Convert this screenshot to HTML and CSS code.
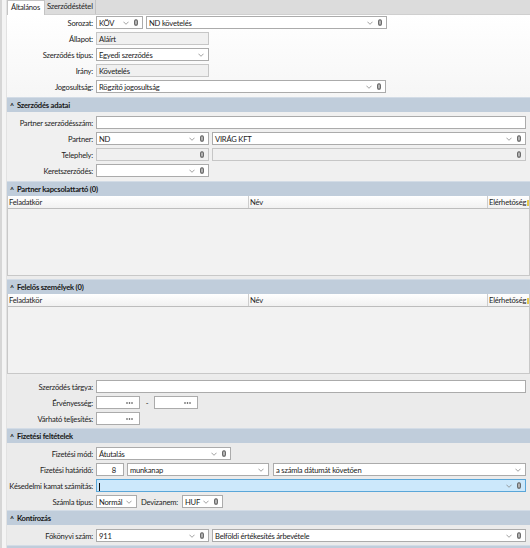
FILE: index.html
```html
<!DOCTYPE html>
<html lang="hu">
<head>
<meta charset="utf-8">
<title>Szerződés</title>
<link rel="stylesheet" href="styles.css">
</head>
<body>
<div class="app">
  <div class="side"></div>
  <div class="main">
    <div class="tabs">
      <div class="tab on">Általános</div>
      <div class="tab">Szerződéstétel</div>
    </div>

    <div class="form top">
      <div class="row"><div class="lbl">Sorozat:</div>
        <div class="fld w47"><span class="v">KÖV</span><svg class="chev" viewBox="0 0 7 4"><polyline points="0.5,0.5 3.5,3.5 6.5,0.5"/></svg><svg class="clip" viewBox="0 0 4 7"><rect x="0.7" y="0.7" width="2.6" height="5.6" rx="1.3"/></svg></div>
        <div class="fld w241"><span class="v">ND követelés</span><svg class="chev" viewBox="0 0 7 4"><polyline points="0.5,0.5 3.5,3.5 6.5,0.5"/></svg><svg class="clip" viewBox="0 0 4 7"><rect x="0.7" y="0.7" width="2.6" height="5.6" rx="1.3"/></svg></div>
      </div>
      <div class="row"><div class="lbl">Állapot:</div>
        <div class="fld w113 dis"><span class="v">Aláírt</span></div>
      </div>
      <div class="row"><div class="lbl">Szerződés típus:</div>
        <div class="fld w113"><span class="v">Egyedi szerződés</span><svg class="chev" viewBox="0 0 7 4"><polyline points="0.5,0.5 3.5,3.5 6.5,0.5"/></svg></div>
      </div>
      <div class="row"><div class="lbl">Irány:</div>
        <div class="fld w113 dis"><span class="v">Követelés</span></div>
      </div>
      <div class="row"><div class="lbl">Jogosultság:</div>
        <div class="fld w290"><span class="v">Rögzítő jogosultság</span><svg class="chev" viewBox="0 0 7 4"><polyline points="0.5,0.5 3.5,3.5 6.5,0.5"/></svg><svg class="clip" viewBox="0 0 4 7"><rect x="0.7" y="0.7" width="2.6" height="5.6" rx="1.3"/></svg></div>
      </div>
    </div>

    <div class="sh"><span class="car">^</span>Szerződés adatai</div>
    <div class="form adat">
      <div class="row"><div class="lbl">Partner szerződésszám:</div>
        <div class="fld grow"><span class="v"></span></div>
      </div>
      <div class="row"><div class="lbl">Partner:</div>
        <div class="fld w113"><span class="v">ND</span><svg class="chev" viewBox="0 0 7 4"><polyline points="0.5,0.5 3.5,3.5 6.5,0.5"/></svg><svg class="clip" viewBox="0 0 4 7"><rect x="0.7" y="0.7" width="2.6" height="5.6" rx="1.3"/></svg></div>
        <div class="fld grow"><span class="v">VIRÁG KFT</span><svg class="chev" viewBox="0 0 7 4"><polyline points="0.5,0.5 3.5,3.5 6.5,0.5"/></svg><svg class="clip" viewBox="0 0 4 7"><rect x="0.7" y="0.7" width="2.6" height="5.6" rx="1.3"/></svg></div>
      </div>
      <div class="row"><div class="lbl">Telephely:</div>
        <div class="fld w113 dis"><span class="v"></span><svg class="clip" viewBox="0 0 4 7"><rect x="0.7" y="0.7" width="2.6" height="5.6" rx="1.3"/></svg></div>
        <div class="fld grow dis"><span class="v"></span><svg class="clip" viewBox="0 0 4 7"><rect x="0.7" y="0.7" width="2.6" height="5.6" rx="1.3"/></svg></div>
      </div>
      <div class="row"><div class="lbl">Keretszerződés:</div>
        <div class="fld w113"><span class="v"></span><svg class="chev" viewBox="0 0 7 4"><polyline points="0.5,0.5 3.5,3.5 6.5,0.5"/></svg><svg class="clip" viewBox="0 0 4 7"><rect x="0.7" y="0.7" width="2.6" height="5.6" rx="1.3"/></svg></div>
      </div>
    </div>

    <div class="sh"><span class="car">^</span>Partner kapcsolattartó (0)</div>
    <div class="tblwrap">
      <div class="tbl">
        <div class="thead">
          <div class="th c1">Feladatkör</div>
          <div class="th c2">Név</div>
          <div class="th c3">Elérhetőség<span class="flt"></span></div>
        </div>
        <div class="tbody"></div>
      </div>
    </div>

    <div class="sh"><span class="car">^</span>Felelős személyek (0)</div>
    <div class="tblwrap">
      <div class="tbl">
        <div class="thead">
          <div class="th c1">Feladatkör</div>
          <div class="th c2">Név</div>
          <div class="th c3">Elérhetőség<span class="flt"></span></div>
        </div>
        <div class="tbody"></div>
      </div>
    </div>

    <div class="form low">
      <div class="row"><div class="lbl">Szerződés tárgya:</div>
        <div class="fld grow"><span class="v"></span></div>
      </div>
      <div class="row"><div class="lbl">Érvényesség:</div>
        <div class="fld w44"><span class="v"></span><svg class="dots" viewBox="0 0 7 2"><circle cx="1" cy="1" r="0.8"/><circle cx="3.5" cy="1" r="0.8"/><circle cx="6" cy="1" r="0.8"/></svg></div>
        <span class="dash">-</span>
        <div class="fld w44"><span class="v"></span><svg class="dots" viewBox="0 0 7 2"><circle cx="1" cy="1" r="0.8"/><circle cx="3.5" cy="1" r="0.8"/><circle cx="6" cy="1" r="0.8"/></svg></div>
      </div>
      <div class="row"><div class="lbl">Várható teljesítés:</div>
        <div class="fld w44"><span class="v"></span><svg class="dots" viewBox="0 0 7 2"><circle cx="1" cy="1" r="0.8"/><circle cx="3.5" cy="1" r="0.8"/><circle cx="6" cy="1" r="0.8"/></svg></div>
      </div>
    </div>

    <div class="sh"><span class="car">^</span>Fizetési feltételek</div>
    <div class="form low fiz">
      <div class="row"><div class="lbl">Fizetési mód:</div>
        <div class="fld w135"><span class="v">Átutalás</span><svg class="chev" viewBox="0 0 7 4"><polyline points="0.5,0.5 3.5,3.5 6.5,0.5"/></svg><svg class="clip" viewBox="0 0 4 7"><rect x="0.7" y="0.7" width="2.6" height="5.6" rx="1.3"/></svg></div>
      </div>
      <div class="row"><div class="lbl">Fizetési határidő:</div>
        <div class="fld w28 num"><span class="v">8</span></div>
        <div class="fld w142"><span class="v">munkanap</span><svg class="chev" viewBox="0 0 7 4"><polyline points="0.5,0.5 3.5,3.5 6.5,0.5"/></svg></div>
        <div class="fld grow sp4"><span class="v">a számla dátumát követően</span><svg class="chev" viewBox="0 0 7 4"><polyline points="0.5,0.5 3.5,3.5 6.5,0.5"/></svg></div>
      </div>
      <div class="row"><div class="lbl">Késedelmi kamat számítás:</div>
        <div class="fld grow focus"><span class="v"><span class="caret"></span></span><svg class="chev" viewBox="0 0 7 4"><polyline points="0.5,0.5 3.5,3.5 6.5,0.5"/></svg><svg class="clip" viewBox="0 0 4 7"><rect x="0.7" y="0.7" width="2.6" height="5.6" rx="1.3"/></svg></div>
      </div>
      <div class="row"><div class="lbl">Számla típus:</div>
        <div class="fld w41"><span class="v">Normál</span><svg class="chev" viewBox="0 0 7 4"><polyline points="0.5,0.5 3.5,3.5 6.5,0.5"/></svg></div>
        <div class="lbl2">Devizanem:</div>
        <div class="fld w41"><span class="v">HUF</span><svg class="chev" viewBox="0 0 7 4"><polyline points="0.5,0.5 3.5,3.5 6.5,0.5"/></svg><svg class="clip" viewBox="0 0 4 7"><rect x="0.7" y="0.7" width="2.6" height="5.6" rx="1.3"/></svg></div>
      </div>
    </div>

    <div class="sh"><span class="car">^</span>Kontírozás</div>
    <div class="form low kont">
      <div class="row"><div class="lbl">Főkönyvi szám:</div>
        <div class="fld w113"><span class="v">911</span><svg class="chev" viewBox="0 0 7 4"><polyline points="0.5,0.5 3.5,3.5 6.5,0.5"/></svg><svg class="clip" viewBox="0 0 4 7"><rect x="0.7" y="0.7" width="2.6" height="5.6" rx="1.3"/></svg></div>
        <div class="fld grow"><span class="v">Belföldi értékesítés árbevétele</span><svg class="chev" viewBox="0 0 7 4"><polyline points="0.5,0.5 3.5,3.5 6.5,0.5"/></svg><svg class="clip" viewBox="0 0 4 7"><rect x="0.7" y="0.7" width="2.6" height="5.6" rx="1.3"/></svg></div>
      </div>
    </div>
    <div class="sh"></div>
  </div>
</div>
</body>
</html>
```

FILE: styles.css
```css
* { box-sizing: border-box; }
html, body { margin: 0; padding: 0; }
body {
  font-family: Lato, "Noto Sans", sans-serif;
  font-size: 7.6px;
  letter-spacing: -0.2px;
  color: #1e1e1e;
  background: #ececec;
  width: 530px;
  height: 548px;
  overflow: hidden;
}
.app { display: flex; height: 548px; }
.side {
  width: 7px;
  flex: none;
  background: #f4f4f4;
  border-left: 2px solid #d6d6d6;
  border-right: 1px solid #e2e2e2;
}
.main { flex: 1; display: flex; flex-direction: column; min-width: 0; }

.tabs {
  height: 15px;
  flex: none;
  display: flex;
  align-items: flex-end;
  background: #dcdcdc;
  border-bottom: 1px solid #cfcfcf;
}
.tab {
  height: 14px;
  line-height: 13px;
  padding: 0 2px 0 2px;
  border-right: 1px solid #c4c4c4;
  white-space: nowrap;
}
.tab.on {
  background: #fff;
  height: 15px;
  margin-bottom: -1px;
  border: 1px solid #c4c4c4;
  border-bottom: none;
  padding: 0 4px 0 3px;
}

.form {
  display: flex;
  flex-direction: column;
  gap: 3px;
  padding: 4px 4px 4px 0;
}
.top { padding-top: 1px; background: linear-gradient(#ffffff, #f6f6f6); }
.adat { background: #f0f0f0; }
.low { background: #ebebeb; padding-top: 3px; padding-bottom: 3px; }
.fiz { padding-top: 4px; padding-bottom: 2px; }
.kont { padding-top: 4px; padding-bottom: 3px; }

.row { display: flex; align-items: center; height: 13px; gap: 3px; }
.lbl {
  width: 86px;
  flex: none;
  display: flex;
  justify-content: flex-end;
  white-space: nowrap;
  color: #222;
}
.lbl2 { white-space: nowrap; margin: 0 1px 0 1px; }
.dash { width: 8px; text-align: center; }

.fld {
  height: 13px;
  flex: none;
  display: flex;
  align-items: center;
  border: 1px solid #ababab;
  background: #fff;
  padding: 0 4px 0 2px;
  gap: 5px;
  white-space: nowrap;
  overflow: hidden;
}
.fld .v { flex: 1; min-width: 0; color: #1a1a1a; }
.fld.dis { background: #f0f0f0; border-color: #c6c6c6; }
.fld.focus { background: #cce8fb; border-color: #5aa6d8; }
.fld.num .v { text-align: right; padding-right: 3px; }
.caret { display: inline-block; width: 1px; height: 8px; background: #111; vertical-align: middle; }
.grow { flex: 1; }
.sp4 { margin-left: 1px; }
.w28 { width: 28px; }
.w41 { width: 41px; }
.w44 { width: 44px; }
.w47 { width: 47px; }
.w113 { width: 113px; }
.w135 { width: 135px; }
.w142 { width: 142px; }
.w241 { width: 241px; }
.w290 { width: 290px; }

.chev { width: 6px; height: 4px; flex: none; }
.chev polyline { fill: none; stroke: #858585; stroke-width: 0.9; }
.clip { width: 4px; height: 7px; flex: none; }
.clip rect { fill: #d0d0d0; stroke: #555; stroke-width: 1.1; }
.dots { width: 7px; height: 2px; flex: none; margin-right: 2px; }
.dots circle { fill: #333; }

.sh {
  height: 15px;
  flex: none;
  background: #c0cddb;
  border-top: 1px solid #d3dce6;
  font-weight: bold;
  line-height: 14px;
  padding-left: 3px;
  color: #151515;
}
.car { display: inline-block; font-size: 7px; margin-right: 3px; transform: translateY(1px); }

.tblwrap { background: #ececec; padding-bottom: 3px; }
.tbl { border: 1px solid #c8c8c8; border-top: none; }
.thead {
  display: flex;
  height: 13px;
  background: linear-gradient(#ffffff, #f1f1f1);
  border-bottom: 1px solid #bdbdbd;
}
.th {
  line-height: 12px;
  padding-left: 1px;
  border-right: 1px solid #cdcdcd;
  white-space: nowrap;
  overflow: hidden;
}
.c1 { width: 241px; }
.c2 { width: 239px; }
.c3 { flex: 1; border-right: none; padding-left: 1px; }
.flt { display: inline-block; width: 2px; height: 6px; margin-left: 1px; background: #e8c84a; vertical-align: middle; }
.tbody { height: 66px; background: #f2f2f2; }
```
